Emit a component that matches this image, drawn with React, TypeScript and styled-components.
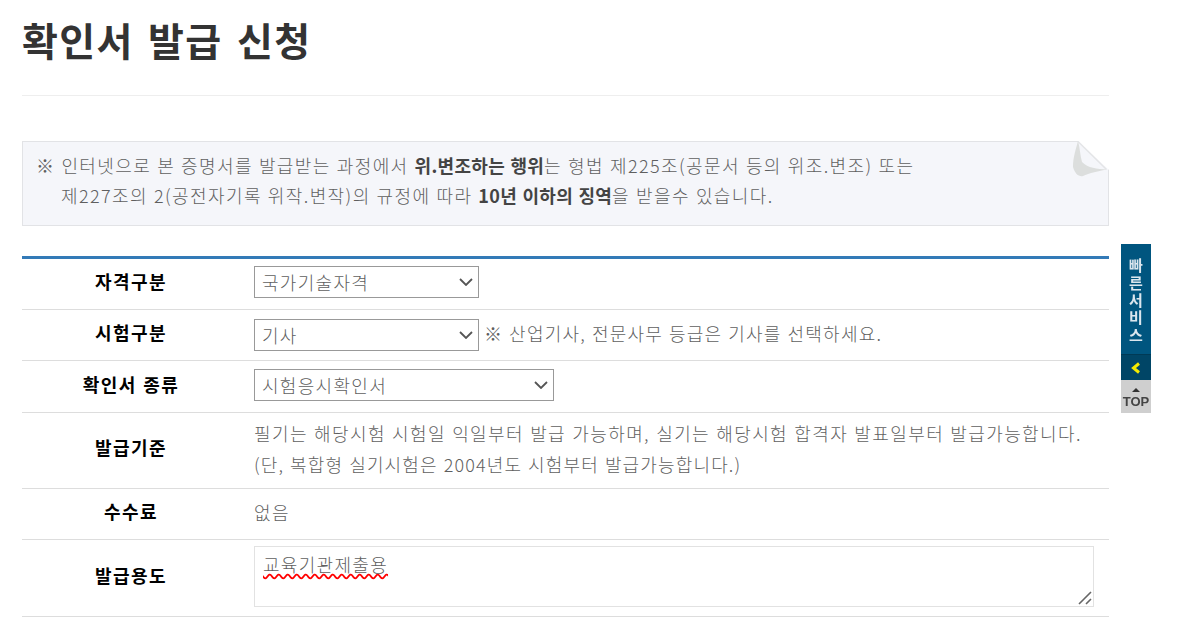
import styled, { createGlobalStyle } from 'styled-components';

const GlobalStyle = createGlobalStyle`
  html, body {
    margin: 0;
    padding: 0;
    background: #fff;
    overflow: hidden;
  }
  body {
    font-family: 'Noto Sans CJK KR', 'Noto Sans', sans-serif;
    color: #666;
  }
`;

const Chevron = () => (
  <SelectArrow viewBox="0 0 14 8" aria-hidden="true">
    <path d="M1 1 L7 7 L13 1" fill="none" stroke="#555" strokeWidth="1.8" />
  </SelectArrow>
);

const DropDown = ({ value, width }: { value: string; width: number }) => (
  <SelectWrap $width={width}>
    <Select defaultValue={value}>
      <option>{value}</option>
    </Select>
    <Chevron />
  </SelectWrap>
);

export default function App() {
  return (
    <Page>
      <GlobalStyle />
      <Title>확인서 발급 신청</Title>
      <Divider />
      <Notice>
        <NoticeLine>
          ※ 인터넷으로 본 증명서를 발급받는 과정에서 <strong>위.변조하는 행위</strong>는 형법 제225조(공문서 등의
          위조.변조) 또는
        </NoticeLine>
        <NoticeLine $indent>
          제227조의 2(공전자기록 위작.변작)의 규정에 따라 <strong>10년 이하의 징역</strong>을 받을수 있습니다.
        </NoticeLine>
        <PageFold viewBox="0 0 36 38" aria-hidden="true">
          <path d="M5 0 L36 0 L36 29 Z" fill="#fff" />
          <path d="M5 0.5 L33.5 28.5" stroke="#e4e5e7" strokeWidth="1.5" fill="none" />
          <FoldShadow d="M5 0 C3 8 0 16 0 26 C2 33 6 36 10 35 C16 32 26 30 34 28.5 C24 28 15 27 9 21 C7 14 7 7 5 0 Z" />
        </PageFold>
      </Notice>

      <FormTable>
        <tbody>
          <Row $height={52}>
            <Label>자격구분</Label>
            <Value $top={7}>
              <DropDown value="국가기술자격" width={225} />
            </Value>
          </Row>
          <Row $height={51}>
            <Label>시험구분</Label>
            <Value $top={9}>
              <InlineField>
                <DropDown value="기사" width={225} />
                <Hint>※ 산업기사, 전문사무 등급은 기사를 선택하세요.</Hint>
              </InlineField>
            </Value>
          </Row>
          <Row $height={52}>
            <Label>확인서 종류</Label>
            <Value $top={8}>
              <DropDown value="시험응시확인서" width={300} />
            </Value>
          </Row>
          <Row $height={76}>
            <Label $raised>발급기준</Label>
            <Value>
              <Para>필기는 해당시험 시험일 익일부터 발급 가능하며, 실기는 해당시험 합격자 발표일부터 발급가능합니다.</Para>
              <Para $tight>(단, 복합형 실기시험은 2004년도 시험부터 발급가능합니다.)</Para>
            </Value>
          </Row>
          <Row $height={51}>
            <Label>수수료</Label>
            <Value>
              <Para>없음</Para>
            </Value>
          </Row>
          <Row $height={77}>
            <Label>발급용도</Label>
            <Value $top={6}>
              <PurposeWrap>
                <Purpose defaultValue="교육기관제출용" spellCheck={false} />
                <ResizeGrip viewBox="0 0 14 14" aria-hidden="true">
                  <path d="M1 13 L13 1 M8 13 L13 8" stroke="#666" strokeWidth="1.6" fill="none" />
                </ResizeGrip>
              </PurposeWrap>
            </Value>
          </Row>
        </tbody>
      </FormTable>

      <QuickBar>
        <QuickTitle>빠른서비스</QuickTitle>
        <QuickToggle>
          <svg width="12" height="12" viewBox="0 0 12 12" aria-hidden="true">
            <path d="M9 1.5 L3.5 6 L9 10.5" fill="none" stroke="#f4ea00" strokeWidth="3" />
          </svg>
        </QuickToggle>
        <TopButton>
          <TopArrow />
          <TopLabel>TOP</TopLabel>
        </TopButton>
      </QuickBar>
    </Page>
  );
}

const Page = styled.div`
  width: 1087px;
  margin-left: 22px;
`;

const Title = styled.h1`
  margin: 0;
  height: 95px;
  padding-top: 11px;
  box-sizing: border-box;
  font-size: 39px;
  line-height: 56px;
  font-weight: 700;
  letter-spacing: 1.4px;
  word-spacing: 4px;
  color: #333;
`;

const Divider = styled.hr`
  margin: 0 0 45px;
  border: 0;
  border-top: 1px solid #eee;
`;

const Notice = styled.div`
  position: relative;
  box-sizing: border-box;
  height: 85px;
  padding: 8px 13px;
  background: #f5f6fa;
  border: 1px solid #e2e3e6;
`;

const NoticeLine = styled.p<{ $indent?: boolean }>`
  margin: 0;
  padding-left: ${({ $indent }) => ($indent ? '25px' : '0')};
  font-size: 18px;
  line-height: 30px;
  letter-spacing: 1.4px;
  word-spacing: 0.6px;
  font-weight: 300;
  color: #5f5f5f;
  white-space: nowrap;

  strong {
    font-weight: 700;
    letter-spacing: 0.3px;
    word-spacing: 1px;
    color: #444;
  }
`;

const PageFold = styled.svg`
  position: absolute;
  top: -1px;
  right: -1px;
  width: 36px;
  height: 38px;
`;

const FoldShadow = styled.path`
  fill: #dcdedd;
  filter: blur(0.6px);
`;

const FormTable = styled.table`
  width: 100%;
  margin-top: 30px;
  border-collapse: collapse;
  border-top: 3px solid #337ab7;
`;

const Row = styled.tr<{ $height: number }>`
  height: ${({ $height }) => $height}px;
  border-bottom: 1px solid #ddd;
`;

const Label = styled.th<{ $raised?: boolean }>`
  width: 218px;
  padding: 0 0 ${({ $raised }) => ($raised ? 8 : 6)}px;
  font-size: 18px;
  font-weight: 700;
  letter-spacing: 1.4px;
  word-spacing: 1px;
  color: #000;
  text-align: center;
`;

const Value = styled.td<{ $top?: number }>`
  padding: ${({ $top }) => ($top === undefined ? '0 14px 3px' : `${$top}px 14px 0`)};
  vertical-align: ${({ $top }) => ($top === undefined ? 'middle' : 'top')};
  font-size: 18px;
  color: #5f5f5f;
`;

const InlineField = styled.div`
  display: flex;
  align-items: flex-start;
  gap: 5px;
`;

const SelectWrap = styled.div<{ $width: number }>`
  position: relative;
  flex: none;
  width: ${({ $width }) => $width}px;
  height: 32px;
`;

const Select = styled.select`
  display: block;
  box-sizing: border-box;
  width: 100%;
  height: 100%;
  padding: 0 7px;
  appearance: none;
  background: #fff;
  border: 1px solid #999;
  border-radius: 0;
  font-family: inherit;
  font-size: 18px;
  font-weight: 300;
  letter-spacing: 1.3px;
  color: #5f5f5f;
`;

const SelectArrow = styled.svg`
  position: absolute;
  top: 12px;
  right: 6px;
  width: 14px;
  height: 8px;
  pointer-events: none;
`;

const Hint = styled.span`
  font-size: 18px;
  font-weight: 300;
  line-height: 28px;
  letter-spacing: 1.25px;
  word-spacing: 0.6px;
  color: #5f5f5f;
  white-space: nowrap;
`;

const Para = styled.p<{ $tight?: boolean }>`
  margin: 0;
  font-size: 18px;
  font-weight: 300;
  line-height: 31px;
  letter-spacing: ${({ $tight }) => ($tight ? 1.15 : 1.4)}px;
  word-spacing: 0.8px;
  color: #5f5f5f;
  white-space: nowrap;
`;

const PurposeWrap = styled.div`
  position: relative;
  width: 840px;
  height: 61px;
`;

const Purpose = styled.textarea`
  display: block;
  box-sizing: border-box;
  width: 100%;
  height: 100%;
  padding: 3px 8px;
  border: 1px solid #e2e2e2;
  border-radius: 0;
  outline: none;
  resize: none;
  font-family: inherit;
  font-size: 18px;
  font-weight: 300;
  line-height: 28px;
  letter-spacing: 1.3px;
  color: #5f5f5f;
  text-decoration: underline wavy #f00;
  text-underline-offset: 1px;
`;

const ResizeGrip = styled.svg`
  position: absolute;
  right: 2px;
  bottom: 2px;
  width: 14px;
  height: 14px;
  pointer-events: none;
`;

const QuickBar = styled.aside`
  position: fixed;
  top: 244px;
  left: 1121px;
  width: 30px;
  display: flex;
  flex-direction: column;
`;

const QuickTitle = styled.div`
  height: 110px;
  padding-top: 14px;
  box-sizing: border-box;
  display: flex;
  align-items: center;
  writing-mode: vertical-rl;
  text-orientation: upright;
  background: #00557f;
  font-size: 15px;
  letter-spacing: 2.4px;
  font-weight: 700;
  color: #dbe6ee;
  filter: blur(0.4px);
`;

const QuickToggle = styled.div`
  height: 26px;
  display: flex;
  align-items: center;
  justify-content: center;
  background: #004566;
  border-top: 1px solid #003a56;
  box-sizing: border-box;
`;

const TopButton = styled.div`
  height: 33px;
  padding-top: 8px;
  box-sizing: border-box;
  display: flex;
  flex-direction: column;
  align-items: center;
  gap: 3px;
  background: #cfcfcf;
`;

const TopLabel = styled.span`
  font-family: 'Liberation Sans', sans-serif;
  font-size: 13px;
  line-height: 13px;
  font-weight: 700;
  color: #444;
  filter: blur(0.3px);
`;

const TopArrow = styled.span`
  width: 0;
  height: 0;
  border-left: 4px solid transparent;
  border-right: 4px solid transparent;
  border-bottom: 4px solid #333;
`;
